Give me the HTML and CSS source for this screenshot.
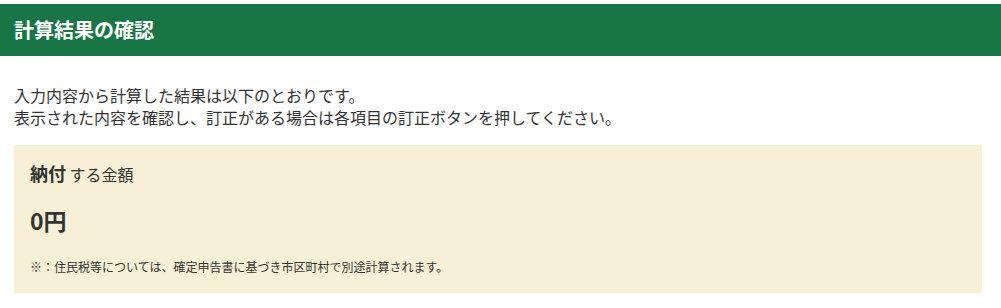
FILE: index.html
```html
<!DOCTYPE html>
<html lang="ja">
<head>
<meta charset="utf-8">
<title>計算結果の確認</title>
<link rel="stylesheet" href="styles.css">
</head>
<body>
<header class="page-header">
  <h1 class="page-title">計算結果の確認</h1>
</header>
<div class="intro">
  <p>入力内容から計算した結果は以下のとおりです。</p>
  <p>表示された内容を確認し、訂正がある場合は各項目の訂正ボタンを押してください。</p>
</div>
<section class="result-box">
  <h2 class="result-title"><strong>納付</strong> する金額</h2>
  <p class="result-amount">0円</p>
  <p class="result-note">※：住民税等については、確定申告書に基づき市区町村で別途計算されます。</p>
</section>
</body>
</html>
```
FILE: styles.css
```css
html, body {
  margin: 0;
  padding: 0;
  background: #ffffff;
}
body {
  font-family: "Noto Sans CJK JP", "Noto Sans", sans-serif;
  color: #333333;
}
p, h1, h2 {
  margin: 0;
}
.page-header {
  margin-top: 4px;
  height: 52px;
  background: #187646;
  display: flex;
  align-items: center;
  padding-left: 14px;
}
.page-title {
  font-size: 20px;
  font-weight: 700;
  color: #ffffff;
  line-height: 1.2;
}
.intro {
  margin: 28px 14px 0;
  font-size: 16px;
  line-height: 22px;
}
.result-box {
  margin: 17px 19px 0 14px;
  background: #f8f0d6;
  padding: 16px 16px 17px;
}
.result-title {
  font-size: 16px;
  font-weight: 400;
  line-height: 24px;
}
.result-title strong {
  font-size: 18px;
  font-weight: 700;
}
.result-amount {
  margin-top: 18px;
  font-size: 23px;
  font-weight: 700;
  line-height: 32px;
}
.result-note {
  margin-top: 22px;
  font-size: 12px;
  line-height: 18px;
}
```
